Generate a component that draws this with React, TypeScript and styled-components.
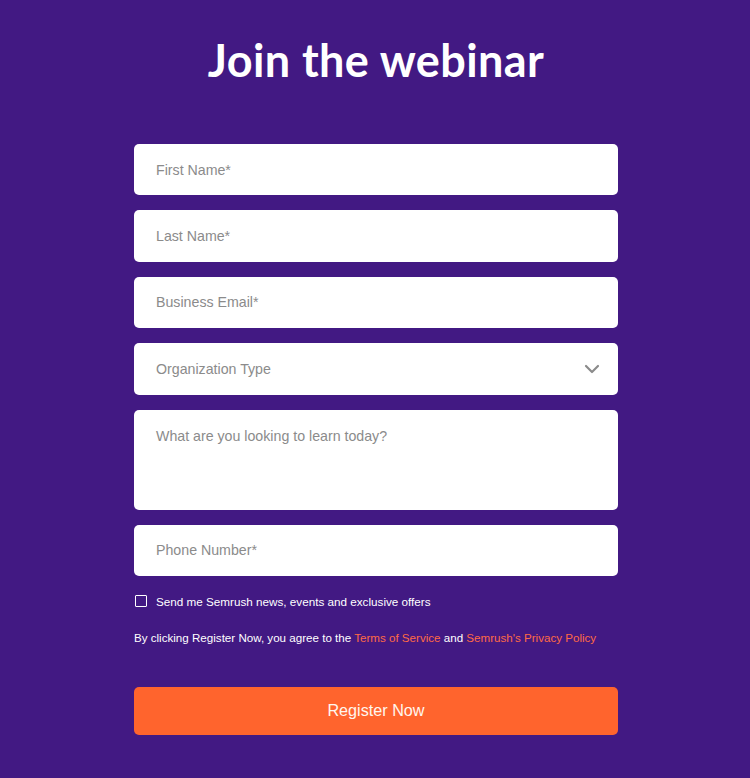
import styled, { createGlobalStyle } from "styled-components";

const GlobalStyle = createGlobalStyle`
  html, body {
    margin: 0;
    padding: 0;
    background: #421983;
  }
  * {
    box-sizing: border-box;
  }
`;

const Page = styled.main`
  min-height: 778px;
  background: #421983;
  display: flex;
  flex-direction: column;
  align-items: center;
  padding-top: 32px;
  padding-left: 2px;
  font-family: "Liberation Sans", Arial, sans-serif;
`;

const Title = styled.h1`
  margin: 0;
  font-family: "Lato", "Inter", sans-serif;
  font-weight: 700;
  font-size: 45px;
  line-height: 56px;
  letter-spacing: 0.4px;
  color: #ffffff;
`;

const Form = styled.form`
  width: 484px;
  margin-top: 56px;
  display: flex;
  flex-direction: column;
  gap: 15px;
`;

const Field = styled.div<{ $tall?: boolean }>`
  height: ${({ $tall }) => ($tall ? "100px" : "51.4px")};
  background: #ffffff;
  border-radius: 5px;
  display: flex;
  align-items: ${({ $tall }) => ($tall ? "flex-start" : "center")};
  padding: ${({ $tall }) => ($tall ? "18px 18px 18px 22px" : "0 18px 0 22px")};
  color: #8b8b8b;
  font-size: 14.2px;
  justify-content: space-between;
`;

const Chevron = () => (
  <svg width="16" height="10" viewBox="0 0 16 10" fill="none">
    <path
      d="M2 2 L8 8 L14 2"
      stroke="#8b8b8b"
      strokeWidth="2.2"
      strokeLinecap="round"
      strokeLinejoin="round"
    />
  </svg>
);

const CheckRow = styled.label`
  display: flex;
  align-items: center;
  gap: 9px;
  margin-top: 4px;
  color: #ffffff;
  font-size: 11.7px;
`;

const Box = styled.span`
  width: 12px;
  height: 12px;
  margin-left: 1px;
  border: 1.5px solid #ffffff;
  border-radius: 1px;
`;

const Legal = styled.p`
  margin: 8px 0 0;
  color: #ffffff;
  font-size: 11.6px;
`;

const Link = styled.a`
  color: #ff6a45;
  text-decoration: none;
`;

const Button = styled.button`
  margin-top: 28px;
  height: 48px;
  border: none;
  border-radius: 5px;
  background: #ff642d;
  color: #fff6ee;
  font-family: "Liberation Sans", Arial, sans-serif;
  font-size: 16.2px;
`;

export default function App() {
  return (
    <>
      <GlobalStyle />
      <Page>
        <Title>Join the webinar</Title>
        <Form onSubmit={(e) => e.preventDefault()}>
          <Field>First Name*</Field>
          <Field>Last Name*</Field>
          <Field>Business Email*</Field>
          <Field>
            Organization Type
            <Chevron />
          </Field>
          <Field $tall>What are you looking to learn today?</Field>
          <Field>Phone Number*</Field>
          <CheckRow>
            <Box />
            Send me Semrush news, events and exclusive offers
          </CheckRow>
          <Legal>
            By clicking Register Now, you agree to the{" "}
            <Link href="#">Terms of Service</Link> and{" "}
            <Link href="#">Semrush's Privacy Policy</Link>
          </Legal>
          <Button type="submit">Register Now</Button>
        </Form>
      </Page>
    </>
  );
}
